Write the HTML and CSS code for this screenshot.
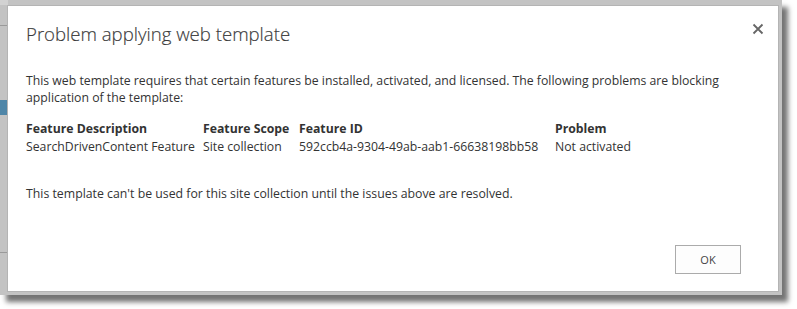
FILE: index.html
```html
<!DOCTYPE html>
<html>
<head>
<meta charset="utf-8">
<link rel="stylesheet" href="styles.css">
</head>
<body>
<div class="screen">
  <div class="dialog">
    <div class="head">
      <h1 class="title">Problem applying web template</h1>
      <svg class="close" width="12" height="12" viewBox="0 0 12 12"><path d="M1.5 1.5 L10.5 10.5 M10.5 1.5 L1.5 10.5" stroke="#666" stroke-width="1.8" fill="none"/></svg>
    </div>
    <p class="intro">This web template requires that certain features be installed, activated, and licensed. The following problems are blocking application of the template:</p>
    <div class="grid">
      <div class="th">Feature Description</div>
      <div class="th">Feature Scope</div>
      <div class="th">Feature ID</div>
      <div class="th">Problem</div>
      <div>SearchDrivenContent Feature</div>
      <div>Site collection</div>
      <div>592ccb4a-9304-49ab-aab1-66638198bb58</div>
      <div>Not activated</div>
    </div>
    <p class="note">This template can't be used for this site collection until the issues above are resolved.</p>
    <div class="actions"><button class="ok">OK</button></div>
  </div>
</div>
</body>
</html>
```
FILE: styles.css
```css
html, body { margin: 0; padding: 0; background: #fff; }
body { width: 797px; height: 309px; overflow: hidden; }
.screen {
  width: 782px;
  height: 295px;
  box-sizing: border-box;
  padding: 5px 0 0 7px;
  background:
    linear-gradient(#9a9a9a, #9a9a9a) 0 25px / 7px 1px no-repeat,
    linear-gradient(#4f86a8, #4f86a8) 0 100px / 7px 15px no-repeat,
    linear-gradient(#9a9a9a, #9a9a9a) 0 252px / 7px 1px no-repeat,
    linear-gradient(#d2d2d2, #d2d2d2) 0 0 / 8px 5px no-repeat,
    #c3c3c3;
  box-shadow: 6px 7px 5px rgba(0,0,0,0.55);
  font-family: "Open Sans", "Noto Sans", sans-serif;
  color: #444;
}
.dialog {
  width: 772px;
  height: 287px;
  box-sizing: border-box;
  background: #fff;
  border: 1px solid #b4b4b4;
  padding: 15px 18px 0 18px;
  display: flex;
  flex-direction: column;
}
.head { display: flex; justify-content: space-between; align-items: flex-start; }
.title {
  margin: 0;
  font-weight: 300;
  font-size: 18.6px;
  line-height: 26px;
  color: #3a3a3a;
  -webkit-text-stroke: 0.15px #3a3a3a;
}
.close { margin: 2px -4px 0 0; }
.intro {
  margin: 25px 0 0 0;
  font-size: 12.25px;
  line-height: 17px;
  color: #333;
}
.grid {
  margin-top: 14px;
  display: grid;
  grid-template-columns: 177px 96px 256px auto;
  font-size: 12.25px;
  line-height: 18px;
  color: #333;
}
.th { font-weight: 700; }
.note {
  margin: 29px 0 0 0;
  font-size: 12.3px;
  line-height: 17px;
  color: #333;
}
.actions { margin-top: auto; padding-bottom: 17px; display: flex; justify-content: flex-end; padding-right: 19px; }
.ok {
  width: 66px;
  height: 29px;
  border: 1px solid #ababab;
  background: #fdfdfd;
  font-family: "Open Sans", "Noto Sans", sans-serif;
  font-size: 11px;
  color: #444;
  padding: 0;
}
```
